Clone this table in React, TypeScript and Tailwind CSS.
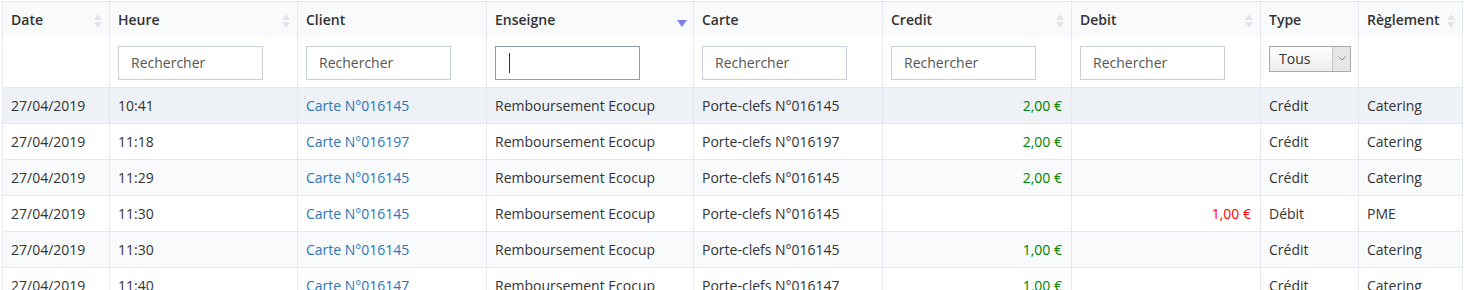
import React from 'react';

type Row = {
  date: string;
  heure: string;
  client: string;
  enseigne: string;
  carte: string;
  credit?: string;
  debit?: string;
  type: string;
  reglement: string;
};

const rows: Row[] = [
  { date: '27/04/2019', heure: '10:41', client: 'Carte N°016145', enseigne: 'Remboursement Ecocup', carte: 'Porte-clefs N°016145', credit: '2,00 €', type: 'Crédit', reglement: 'Catering' },
  { date: '27/04/2019', heure: '11:18', client: 'Carte N°016197', enseigne: 'Remboursement Ecocup', carte: 'Porte-clefs N°016197', credit: '2,00 €', type: 'Crédit', reglement: 'Catering' },
  { date: '27/04/2019', heure: '11:29', client: 'Carte N°016145', enseigne: 'Remboursement Ecocup', carte: 'Porte-clefs N°016145', credit: '2,00 €', type: 'Crédit', reglement: 'Catering' },
  { date: '27/04/2019', heure: '11:30', client: 'Carte N°016145', enseigne: 'Remboursement Ecocup', carte: 'Porte-clefs N°016145', debit: '1,00 €', type: 'Débit', reglement: 'PME' },
  { date: '27/04/2019', heure: '11:30', client: 'Carte N°016145', enseigne: 'Remboursement Ecocup', carte: 'Porte-clefs N°016145', credit: '1,00 €', type: 'Crédit', reglement: 'Catering' },
  { date: '27/04/2019', heure: '11:40', client: 'Carte N°016147', enseigne: 'Remboursement Ecocup', carte: 'Porte-clefs N°016147', credit: '1,00 €', type: 'Crédit', reglement: 'Catering' },
];

// sortable columns: gray up/down arrows, active one: blue down arrow
function SortIcon({ active }: { active?: boolean }) {
  if (active) {
    return (
      <svg width="10" height="8" viewBox="0 0 10 8" className="absolute right-[6px] top-[18px]">
        <path d="M0 0 H10 L5 7 Z" fill="#7c7fe6" />
      </svg>
    );
  }
  return (
    <svg width="8" height="14" viewBox="0 0 8 14" className="absolute right-[7px] top-[12px]">
      <path d="M0 6 L4 0 L8 6 Z" fill="#e1e4e9" />
      <path d="M0 8 L4 14 L8 8 Z" fill="#e1e4e9" />
    </svg>
  );
}

function SearchInput({ focused }: { focused?: boolean }) {
  return (
    <div
      className={`h-[34px] w-[145px] border bg-white flex items-center pl-3 text-[14px] ${
        focused ? 'border-[#8e9ab0]' : 'border-[#c8d0dc] text-[#555]'
      }`}
    >
      {focused ? <span className="w-px h-[20px] bg-[#333] ml-[1px]" /> : 'Rechercher'}
    </div>
  );
}

const headers: { label: string; sort?: 'none' | 'active'; filter?: 'input' | 'focus' | 'select' }[] = [
  { label: 'Date', sort: 'none' },
  { label: 'Heure', sort: 'none', filter: 'input' },
  { label: 'Client', filter: 'input' },
  { label: 'Enseigne', sort: 'active', filter: 'focus' },
  { label: 'Carte', filter: 'input' },
  { label: 'Credit', sort: 'none', filter: 'input' },
  { label: 'Debit', sort: 'none', filter: 'input' },
  { label: 'Type', filter: 'select' },
  { label: 'Règlement', sort: 'none' },
];

const widths = [107, 188, 189, 207, 189, 189, 189, 98, 104];

export default function App() {
  return (
    <div className="w-[1477px] h-[290px] overflow-hidden bg-white pl-[2px] pt-[1px] font-['Open_Sans',sans-serif] text-[14px] text-[#333]">
      <table className="border-collapse table-fixed" style={{ width: widths.reduce((a, b) => a + b, 0) }}>
        <colgroup>
          {widths.map((w, i) => (
            <col key={i} style={{ width: w }} />
          ))}
        </colgroup>
        <thead>
          <tr className="bg-[#f9fafc] h-[35px]">
            {headers.map((h) => (
              <th
                key={h.label}
                className="relative border border-[#e5e9ef] border-b-0 text-left font-semibold text-[14px] px-[8px] align-middle"
              >
                {h.label}
                {h.sort && <SortIcon active={h.sort === 'active'} />}
              </th>
            ))}
          </tr>
          <tr className="h-[51px] bg-white">
            {headers.map((h) => (
              <th key={h.label} className="border-x border-[#e5e9ef] px-[8px] pt-[9px] pb-[6px] align-top text-left font-normal">
                {h.filter === 'input' && <SearchInput />}
                {h.filter === 'focus' && <SearchInput focused />}
                {h.filter === 'select' && (
                  <div className="flex h-[26px] w-[82px] border border-[#a9a9a9] bg-gradient-to-b from-white to-[#ececec]">
                    <span className="flex-1 pl-[9px] leading-[24px] text-[14px] text-[#333]">Tous</span>
                    <span className="w-[18px] border-l border-[#c4c4c4] bg-[#e6e6e6] flex items-center justify-center">
                      <svg width="8" height="5" viewBox="0 0 8 5">
                        <path d="M0.5 0.5 L4 4 L7.5 0.5" fill="none" stroke="#888" strokeWidth="1" />
                      </svg>
                    </span>
                  </div>
                )}
              </th>
            ))}
          </tr>
        </thead>
        <tbody>
          {rows.map((r, i) => (
            <tr
              key={i}
              className={`h-[36px] ${i === 0 ? 'bg-[#eef1f5]' : i % 2 === 0 ? 'bg-[#f9fafc]' : 'bg-white'}`}
            >
              <td className="border border-[#e5e9ef] px-[8px]">{r.date}</td>
              <td className="border border-[#e5e9ef] px-[8px]">{r.heure}</td>
              <td className="border border-[#e5e9ef] px-[8px] text-[#2f75b5]">{r.client}</td>
              <td className="border border-[#e5e9ef] px-[8px]">{r.enseigne}</td>
              <td className="border border-[#e5e9ef] px-[8px]">{r.carte}</td>
              <td className="border border-[#e5e9ef] pl-[8px] pr-[9px] text-right text-[#008000]">{r.credit}</td>
              <td className="border border-[#e5e9ef] pl-[8px] pr-[9px] text-right text-[#ff0000]">{r.debit}</td>
              <td className="border border-[#e5e9ef] px-[8px]">{r.type}</td>
              <td className="border border-[#e5e9ef] px-[8px]">{r.reglement}</td>
            </tr>
          ))}
        </tbody>
      </table>
    </div>
  );
}
